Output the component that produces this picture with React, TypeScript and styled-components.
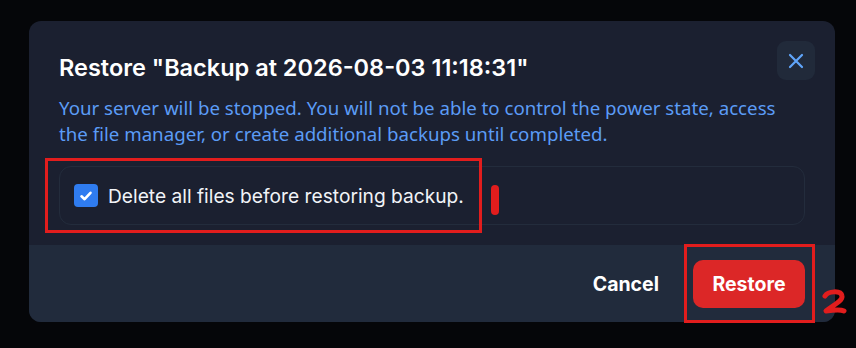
import React from "react";
import styled, { createGlobalStyle } from "styled-components";

const Global = createGlobalStyle`
  html, body { margin: 0; padding: 0; background: #050609; }
  body { width: 856px; height: 348px; overflow: hidden; }
`;

const Page = styled.div`
  width: 856px;
  height: 348px;
  box-sizing: border-box;
  padding: 21px 0 0 29px;
  background: #050609;
  display: flex;
  align-items: flex-start;
`;

const Modal = styled.div`
  position: relative;
  width: 806px;
  border-radius: 12px;
  background: #1b2030;
  display: flex;
  flex-direction: column;
`;

const Body = styled.div`
  padding: 20px 30px 20px 30px;
  display: flex;
  flex-direction: column;
`;

const Header = styled.div`
  display: flex;
  justify-content: space-between;
  align-items: flex-start;
  height: 54px;
`;

const Title = styled.h2`
  margin: 12px 0 0 0;
  font-family: Inter, "Liberation Sans", sans-serif;
  font-weight: 600;
  font-size: 23.5px;
  line-height: 30px;
  color: #ffffff;
  white-space: nowrap;
`;

const CloseButton = styled.button`
  margin: 0 -10px 0 0;
  width: 38px;
  height: 39px;
  border: none;
  border-radius: 9px;
  background: #212a3a;
  display: flex;
  align-items: center;
  justify-content: center;
  padding: 0;
  flex: none;
`;

const Description = styled.p`
  margin: 0;
  font-family: "Noto Sans", sans-serif;
  font-size: 18.7px;
  line-height: 26px;
  color: #5b9cf6;
`;

const OptionBox = styled.div`
  margin-top: 19px;
  height: 59px;
  box-sizing: border-box;
  border: 1px solid #232c3c;
  border-radius: 12px;
  display: flex;
  align-items: center;
  padding: 0 14px;
  gap: 10px;
`;

const CheckBox = styled.span`
  width: 24px;
  height: 23px;
  border-radius: 4px;
  background: #2f7cf0;
  display: flex;
  align-items: center;
  justify-content: center;
  flex: none;
`;

const OptionLabel = styled.span`
  font-family: Inter, "Liberation Sans", sans-serif;
  font-size: 19.2px;
  color: #f1f3f7;
`;

const Footer = styled.div`
  height: 77px;
  background: #212b3c;
  border-radius: 0 0 12px 12px;
  display: flex;
  align-items: center;
  justify-content: flex-end;
  padding: 0 30px 0 0;
  gap: 34px;
`;

const CancelButton = styled.button`
  border: none;
  background: transparent;
  padding: 0;
  font-family: Inter, "Liberation Sans", sans-serif;
  font-weight: 700;
  font-size: 19.5px;
  color: #ffffff;
`;

const RestoreButton = styled.button`
  width: 112px;
  height: 48px;
  border: none;
  border-radius: 10px;
  background: #dc2727;
  font-family: Inter, "Liberation Sans", sans-serif;
  font-weight: 700;
  font-size: 19.5px;
  color: #ffffff;
`;

const Annotation = styled.div<{ $x: number; $y: number; $w: number; $h: number }>`
  position: absolute;
  left: ${(p) => p.$x}px;
  top: ${(p) => p.$y}px;
  width: ${(p) => p.$w}px;
  height: ${(p) => p.$h}px;
  box-sizing: border-box;
  border: 3px solid #e21d1d;
  pointer-events: none;
`;

const Mark = styled.svg<{ $x: number; $y: number }>`
  position: absolute;
  left: ${(p) => p.$x}px;
  top: ${(p) => p.$y}px;
  overflow: visible;
`;

export default function App() {
  return (
    <>
      <Global />
      <Page>
        <Modal>
          <Body>
            <Header>
              <Title>Restore "Backup at 2026-08-03 11:18:31"</Title>
              <CloseButton aria-label="Close">
                <svg width="18" height="18" viewBox="0 0 18 18">
                  <path d="M3 3 L15 15 M15 3 L3 15" stroke="#60a5fa" strokeWidth="2.2" strokeLinecap="round" />
                </svg>
              </CloseButton>
            </Header>
            <Description>
              Your server will be stopped. You will not be able to control the power state, access the file manager, or create additional backups until completed.
            </Description>
            <OptionBox>
              <CheckBox>
                <svg width="16" height="16" viewBox="0 0 16 16">
                  <path d="M3.5 8.3 L6.6 11.2 L12.5 4.8" stroke="#ffffff" strokeWidth="2.6" fill="none" strokeLinecap="round" strokeLinejoin="round" />
                </svg>
              </CheckBox>
              <OptionLabel>Delete all files before restoring backup.</OptionLabel>
            </OptionBox>
          </Body>
          <Footer>
            <CancelButton>Cancel</CancelButton>
            <RestoreButton>Restore</RestoreButton>
          </Footer>
          <Annotation $x={16} $y={137} $w={437} $h={75} />
          <Mark $x={462} $y={164} width="8" height="30">
            <rect x="0" y="0" width="8" height="30" rx="4" fill="#e21d1d" />
          </Mark>
          <Annotation $x={655} $y={223} $w={131} $h={79} />
          <Mark $x={793} $y={269} width="24" height="25">
            <path d="M3 6 C6 1 19 0 20 6 C21 11 10 16 4 21 C11 20 18 19 22 21" stroke="#e21d1d" strokeWidth="5" fill="none" strokeLinecap="round" strokeLinejoin="round" />
          </Mark>
        </Modal>
      </Page>
    </>
  );
}
